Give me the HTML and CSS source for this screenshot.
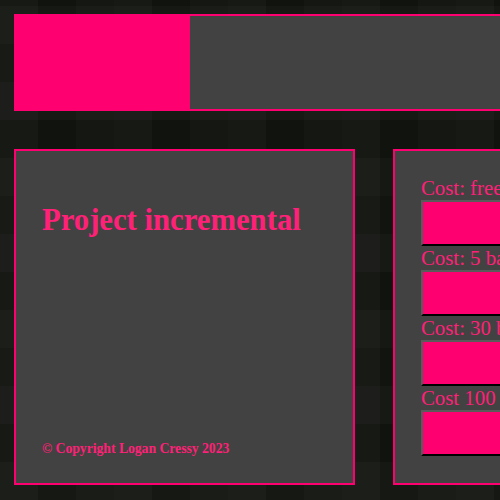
FILE: index.html
```html
<!DOCTYPE html>
<html lang="en">
<head>
<meta charset="utf-8">
<title>Project incremental</title>
<link rel="stylesheet" href="styles.css">
</head>
<body>
  <div class="progress">
    <div class="progress-fill" style="width: 174px"></div>
  </div>
  <div class="main">
    <section class="panel info">
      <h1 class="title">Project incremental</h1>
      <p class="copyright">© Copyright Logan Cressy 2023</p>
    </section>
    <section class="panel shop">
      <div class="item">
        <div class="cost">Cost: free</div>
        <button class="buy" aria-label="Buy 1"></button>
      </div>
      <div class="item">
        <div class="cost">Cost: 5 balls</div>
        <button class="buy" aria-label="Buy 2"></button>
      </div>
      <div class="item">
        <div class="cost">Cost: 30 balls</div>
        <button class="buy" aria-label="Buy 3"></button>
      </div>
      <div class="item">
        <div class="cost">Cost 100 balls</div>
        <button class="buy" aria-label="Buy 4"></button>
      </div>
    </section>
  </div>
</body>
</html>
```

FILE: styles.css
```css
html {
  overflow: hidden;
}

body {
  margin: 0;
  padding: 14px;
  width: 800px;
  min-height: 500px;
  box-sizing: border-box;
  font-family: "Liberation Serif", "Times New Roman", serif;
  background-color: #131511;
  background-image:
    repeating-linear-gradient(90deg, rgba(255,255,255,0.018) 0 38px, rgba(0,0,0,0.035) 38px 76px, rgba(255,255,255,0.01) 76px 114px),
    repeating-linear-gradient(0deg, rgba(255,255,255,0.015) 0 38px, rgba(0,0,0,0.03) 38px 76px, rgba(255,255,255,0.02) 76px 114px, rgba(0,0,0,0.01) 114px 152px);
}

.progress {
  box-sizing: border-box;
  width: 700px;
  height: 97px;
  border: 2px solid #ff0070;
  background: #424242;
  display: flex;
}

.progress-fill {
  background: #ff0070;
  height: 100%;
}

.main {
  display: flex;
  gap: 38px;
  margin-top: 38px;
}

.panel {
  box-sizing: border-box;
  width: 341px;
  height: 336px;
  border: 2px solid #ff0070;
  background: #424242;
  flex: none;
}

.info {
  display: flex;
  flex-direction: column;
  padding: 52px 26px 26px;
}

.title {
  margin: 0;
  font-size: 30.7px;
  line-height: 34px;
  font-weight: bold;
  color: #ff2077;
  white-space: nowrap;
}

.copyright {
  margin: auto 0 0;
  font-size: 13.65px;
  line-height: 16px;
  font-weight: bold;
  color: #ff2077;
  white-space: nowrap;
}

.shop {
  padding: 25px 26px;
}

.cost {
  font-size: 20.8px;
  line-height: 24px;
  color: #ff2077;
  white-space: nowrap;
}

.buy {
  display: block;
  box-sizing: border-box;
  width: 100%;
  height: 46px;
  margin: 0;
  padding: 0;
  border: 2px solid;
  border-color: #5a5a5a #000 #000 #5a5a5a;
  background: #ff0070;
}
```
